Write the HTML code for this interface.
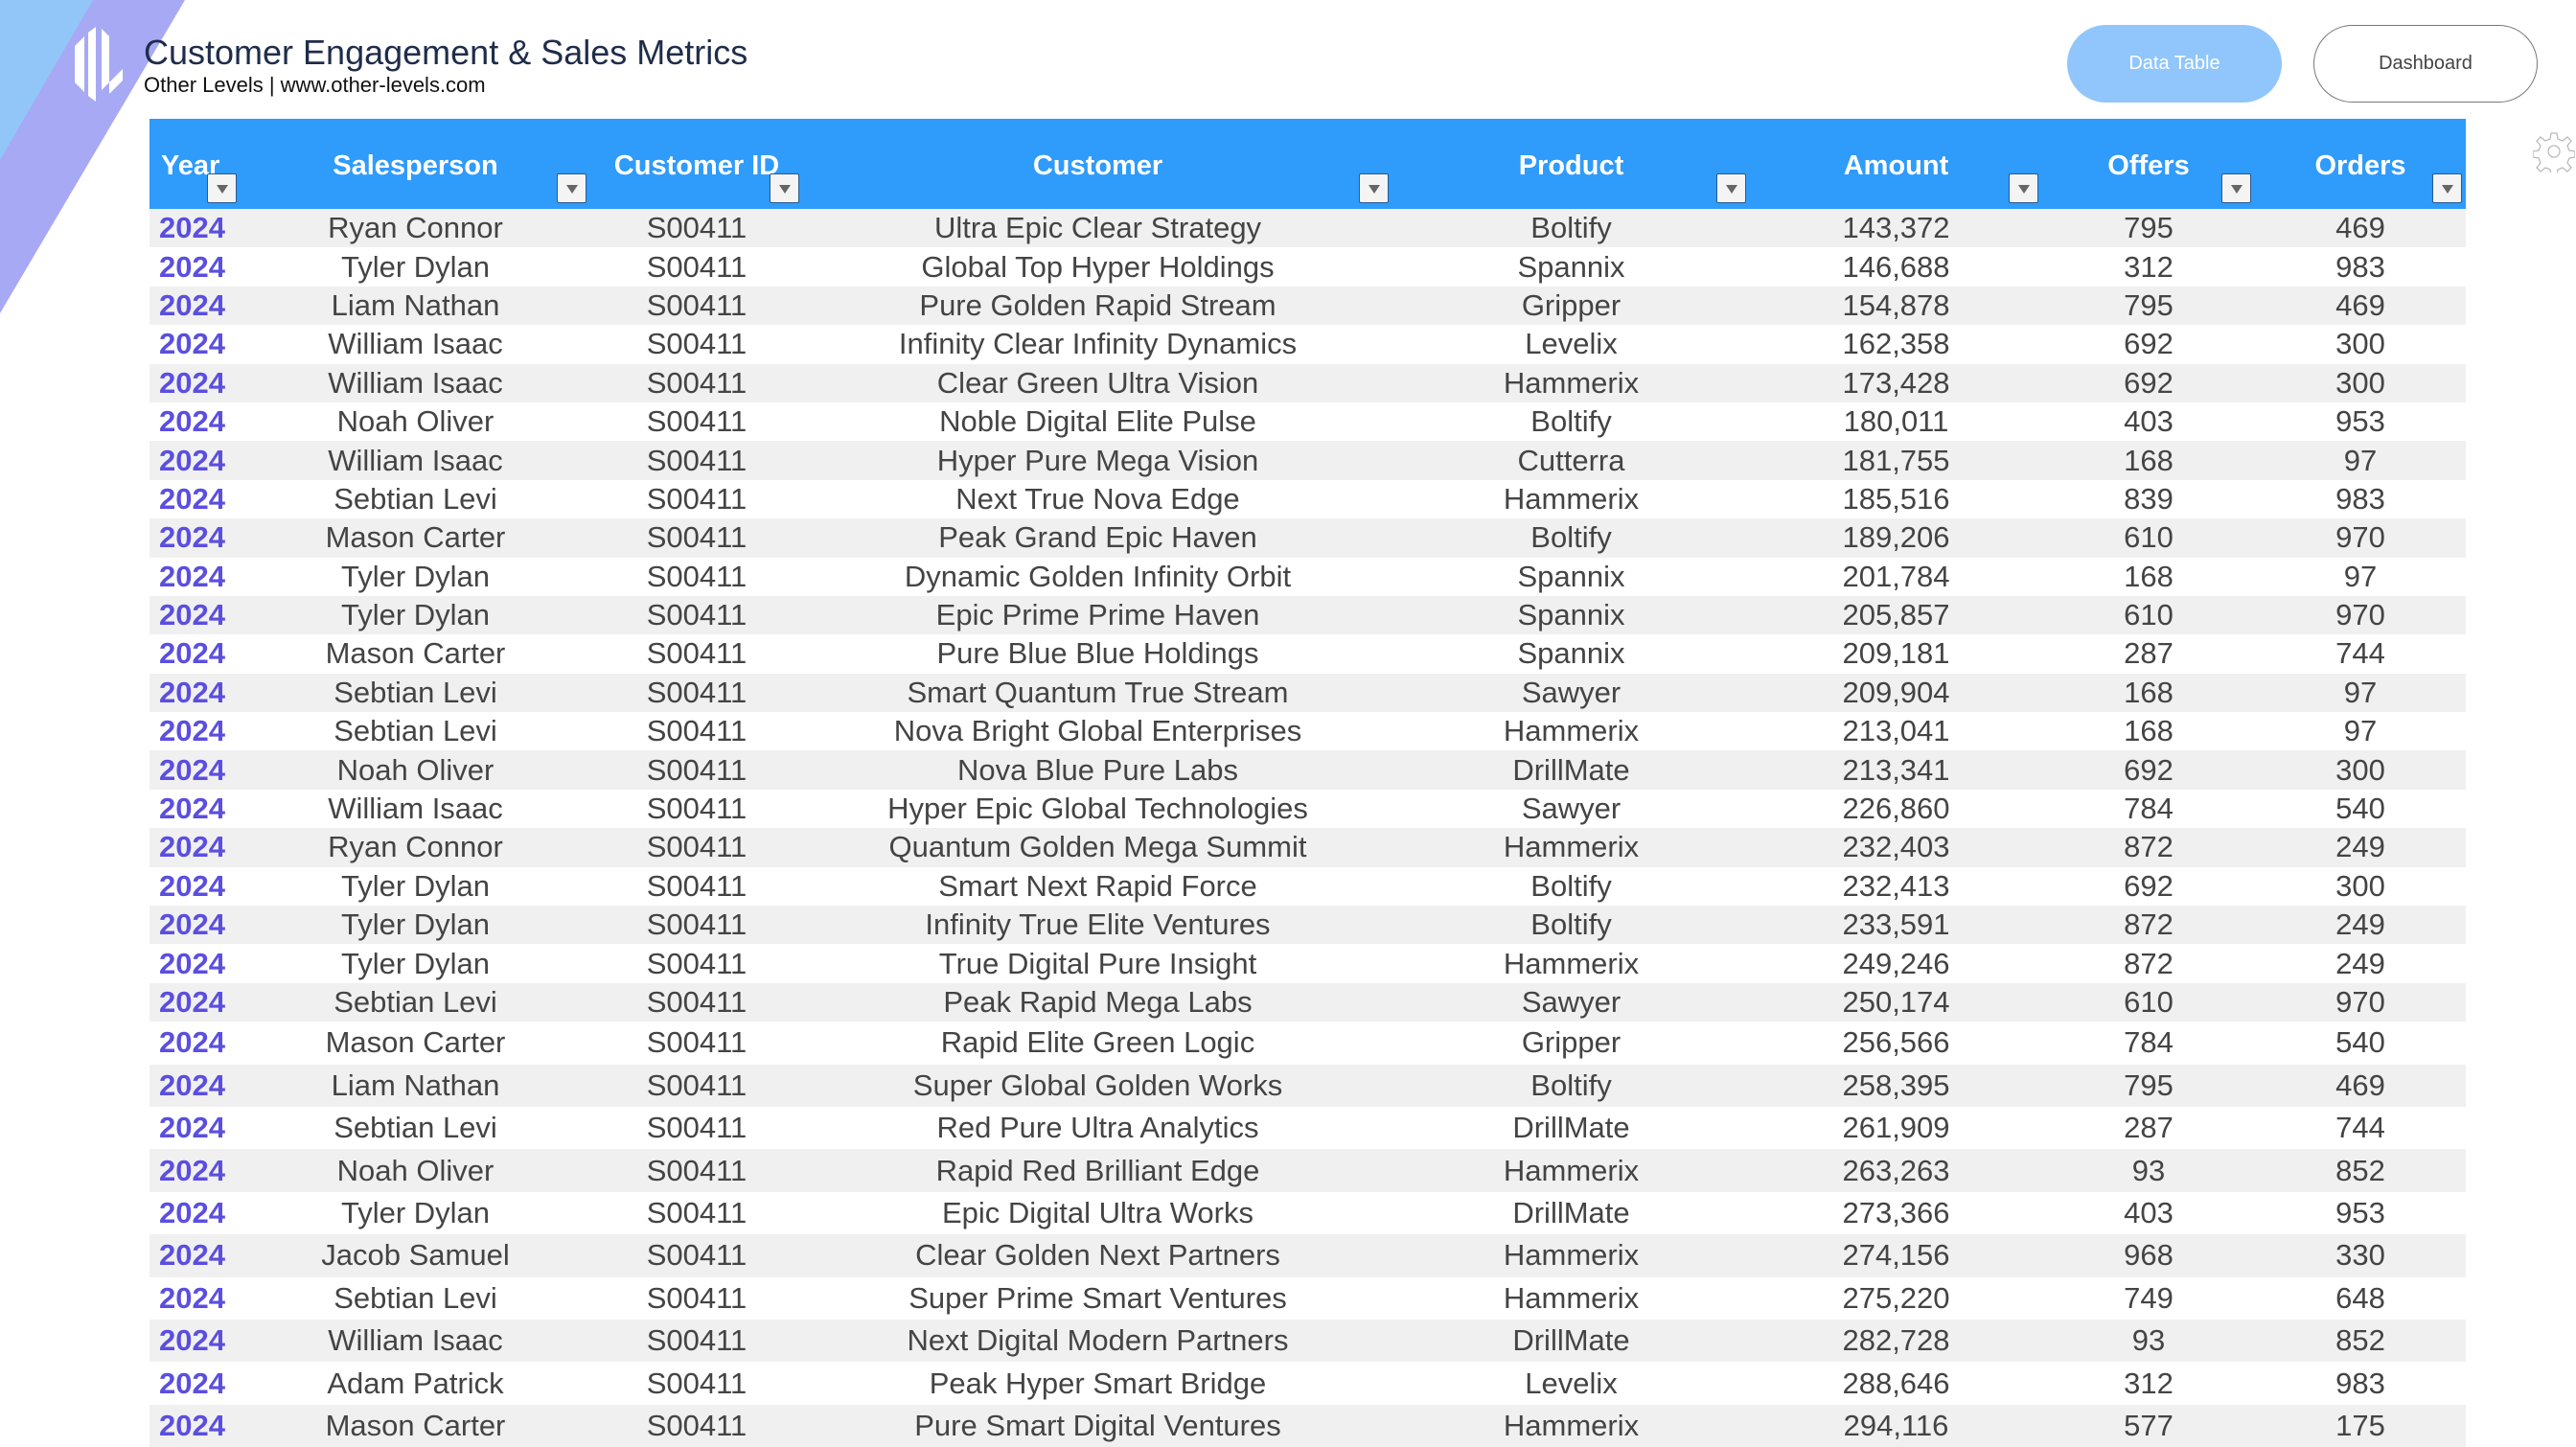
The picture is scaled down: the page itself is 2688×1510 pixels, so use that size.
<!DOCTYPE html>
<html><head><meta charset="utf-8"><style>
*{margin:0;padding:0;box-sizing:border-box}
body{width:2688px;height:1476px;overflow:hidden;background:#fff;font-family:"Liberation Sans",Arial,sans-serif;position:relative}
.abs{position:absolute}
.title{left:150px;top:34px;font-size:36px;color:#1f2d4a}
.sub{left:150px;top:76px;font-size:22px;color:#111}
.btn{top:26px;height:81px;border-radius:41px;font-size:20px;display:flex;align-items:center;justify-content:center}
table{position:absolute;left:156px;top:124px;border-collapse:collapse;table-layout:fixed;width:2417px}
th{background:#2f9bfa;color:#fff;font-size:29px;font-weight:bold;height:94px;position:relative;text-align:center;padding-bottom:0px;padding-top:4px}
td{font-size:31px;color:#444;text-align:center;height:40.4px;padding:0;white-space:nowrap}
tr.t td{height:44.4px}
tbody tr:nth-child(odd) td{background:#f0f0f0}
td.y{color:#5b4ee0;font-weight:bold;text-align:left;padding-left:10px}
.f{position:absolute;bottom:6px;right:4px;width:31px;height:31px;background:#f4f4f4;border:1px solid #2a5a90;border-radius:2px}
.f:after{content:"";position:absolute;left:9px;top:11px;border-left:6px solid transparent;border-right:6px solid transparent;border-top:9px solid #666}
</style></head><body>
<svg class="abs" style="left:0;top:0" width="200" height="340"><polygon points="0,0 193,0 0,327" fill="#a7a9f4"/><polygon points="0,0 97,0 0,167" fill="#92c6f8"/></svg>
<svg class="abs" style="left:76px;top:28px" width="54" height="78" viewBox="0 0 54 78"><g fill="#fff"><polygon points="2,20 12,10 12,68 2,58"/><polygon points="16,6 24,0 24,78 16,72"/><polygon points="30,2 38,10 38,58 30,66"/><polygon points="38,58 52,44 52,56 38,70"/></g></svg>
<div class="abs title">Customer Engagement &amp; Sales Metrics</div>
<div class="abs sub">Other Levels | www.other-levels.com</div>
<div class="abs btn" style="left:2157px;width:224px;background:#90c6fb;color:#fff">Data Table</div>
<div class="abs btn" style="left:2414px;width:234px;border:1.5px solid #777;color:#444">Dashboard</div>
<svg class="abs" style="left:2643px;top:136px" width="44" height="44" viewBox="0 0 44 44"><path d="M19 3h6l1 6 5 2 5-4 4 4-4 5 2 5 6 1v6l-6 1-2 5 4 5-4 4-5-4-5 2-1 6h-6l-1-6-5-2-5 4-4-4 4-5-2-5-6-1v-6l6-1 2-5-4-5 4-4 5 4 5-2z" fill="none" stroke="#bbb" stroke-width="1.3"/><circle cx="22" cy="22" r="6" fill="none" stroke="#bbb" stroke-width="1.3"/></svg>
<table>
<colgroup><col style="width:95px"><col style="width:365px"><col style="width:222px"><col style="width:615px"><col style="width:373px"><col style="width:305px"><col style="width:222px"><col style="width:220px"></colgroup>
<thead><tr><th style="text-align:left;padding-left:12px">Year<span class="f"></span></th><th>Salesperson<span class="f"></span></th><th>Customer ID<span class="f"></span></th><th>Customer<span class="f"></span></th><th>Product<span class="f"></span></th><th>Amount<span class="f"></span></th><th>Offers<span class="f"></span></th><th>Orders<span class="f"></span></th></tr></thead>
<tbody>
<tr><td class="y">2024</td><td>Ryan Connor</td><td>S00411</td><td>Ultra Epic Clear Strategy</td><td>Boltify</td><td>143,372</td><td>795</td><td>469</td></tr>
<tr><td class="y">2024</td><td>Tyler Dylan</td><td>S00411</td><td>Global Top Hyper Holdings</td><td>Spannix</td><td>146,688</td><td>312</td><td>983</td></tr>
<tr><td class="y">2024</td><td>Liam Nathan</td><td>S00411</td><td>Pure Golden Rapid Stream</td><td>Gripper</td><td>154,878</td><td>795</td><td>469</td></tr>
<tr><td class="y">2024</td><td>William Isaac</td><td>S00411</td><td>Infinity Clear Infinity Dynamics</td><td>Levelix</td><td>162,358</td><td>692</td><td>300</td></tr>
<tr><td class="y">2024</td><td>William Isaac</td><td>S00411</td><td>Clear Green Ultra Vision</td><td>Hammerix</td><td>173,428</td><td>692</td><td>300</td></tr>
<tr><td class="y">2024</td><td>Noah Oliver</td><td>S00411</td><td>Noble Digital Elite Pulse</td><td>Boltify</td><td>180,011</td><td>403</td><td>953</td></tr>
<tr><td class="y">2024</td><td>William Isaac</td><td>S00411</td><td>Hyper Pure Mega Vision</td><td>Cutterra</td><td>181,755</td><td>168</td><td>97</td></tr>
<tr><td class="y">2024</td><td>Sebtian Levi</td><td>S00411</td><td>Next True Nova Edge</td><td>Hammerix</td><td>185,516</td><td>839</td><td>983</td></tr>
<tr><td class="y">2024</td><td>Mason Carter</td><td>S00411</td><td>Peak Grand Epic Haven</td><td>Boltify</td><td>189,206</td><td>610</td><td>970</td></tr>
<tr><td class="y">2024</td><td>Tyler Dylan</td><td>S00411</td><td>Dynamic Golden Infinity Orbit</td><td>Spannix</td><td>201,784</td><td>168</td><td>97</td></tr>
<tr><td class="y">2024</td><td>Tyler Dylan</td><td>S00411</td><td>Epic Prime Prime Haven</td><td>Spannix</td><td>205,857</td><td>610</td><td>970</td></tr>
<tr><td class="y">2024</td><td>Mason Carter</td><td>S00411</td><td>Pure Blue Blue Holdings</td><td>Spannix</td><td>209,181</td><td>287</td><td>744</td></tr>
<tr><td class="y">2024</td><td>Sebtian Levi</td><td>S00411</td><td>Smart Quantum True Stream</td><td>Sawyer</td><td>209,904</td><td>168</td><td>97</td></tr>
<tr><td class="y">2024</td><td>Sebtian Levi</td><td>S00411</td><td>Nova Bright Global Enterprises</td><td>Hammerix</td><td>213,041</td><td>168</td><td>97</td></tr>
<tr><td class="y">2024</td><td>Noah Oliver</td><td>S00411</td><td>Nova Blue Pure Labs</td><td>DrillMate</td><td>213,341</td><td>692</td><td>300</td></tr>
<tr><td class="y">2024</td><td>William Isaac</td><td>S00411</td><td>Hyper Epic Global Technologies</td><td>Sawyer</td><td>226,860</td><td>784</td><td>540</td></tr>
<tr><td class="y">2024</td><td>Ryan Connor</td><td>S00411</td><td>Quantum Golden Mega Summit</td><td>Hammerix</td><td>232,403</td><td>872</td><td>249</td></tr>
<tr><td class="y">2024</td><td>Tyler Dylan</td><td>S00411</td><td>Smart Next Rapid Force</td><td>Boltify</td><td>232,413</td><td>692</td><td>300</td></tr>
<tr><td class="y">2024</td><td>Tyler Dylan</td><td>S00411</td><td>Infinity True Elite Ventures</td><td>Boltify</td><td>233,591</td><td>872</td><td>249</td></tr>
<tr><td class="y">2024</td><td>Tyler Dylan</td><td>S00411</td><td>True Digital Pure Insight</td><td>Hammerix</td><td>249,246</td><td>872</td><td>249</td></tr>
<tr><td class="y">2024</td><td>Sebtian Levi</td><td>S00411</td><td>Peak Rapid Mega Labs</td><td>Sawyer</td><td>250,174</td><td>610</td><td>970</td></tr>
<tr class="t"><td class="y">2024</td><td>Mason Carter</td><td>S00411</td><td>Rapid Elite Green Logic</td><td>Gripper</td><td>256,566</td><td>784</td><td>540</td></tr>
<tr class="t"><td class="y">2024</td><td>Liam Nathan</td><td>S00411</td><td>Super Global Golden Works</td><td>Boltify</td><td>258,395</td><td>795</td><td>469</td></tr>
<tr class="t"><td class="y">2024</td><td>Sebtian Levi</td><td>S00411</td><td>Red Pure Ultra Analytics</td><td>DrillMate</td><td>261,909</td><td>287</td><td>744</td></tr>
<tr class="t"><td class="y">2024</td><td>Noah Oliver</td><td>S00411</td><td>Rapid Red Brilliant Edge</td><td>Hammerix</td><td>263,263</td><td>93</td><td>852</td></tr>
<tr class="t"><td class="y">2024</td><td>Tyler Dylan</td><td>S00411</td><td>Epic Digital Ultra Works</td><td>DrillMate</td><td>273,366</td><td>403</td><td>953</td></tr>
<tr class="t"><td class="y">2024</td><td>Jacob Samuel</td><td>S00411</td><td>Clear Golden Next Partners</td><td>Hammerix</td><td>274,156</td><td>968</td><td>330</td></tr>
<tr class="t"><td class="y">2024</td><td>Sebtian Levi</td><td>S00411</td><td>Super Prime Smart Ventures</td><td>Hammerix</td><td>275,220</td><td>749</td><td>648</td></tr>
<tr class="t"><td class="y">2024</td><td>William Isaac</td><td>S00411</td><td>Next Digital Modern Partners</td><td>DrillMate</td><td>282,728</td><td>93</td><td>852</td></tr>
<tr class="t"><td class="y">2024</td><td>Adam Patrick</td><td>S00411</td><td>Peak Hyper Smart Bridge</td><td>Levelix</td><td>288,646</td><td>312</td><td>983</td></tr>
<tr class="t"><td class="y">2024</td><td>Mason Carter</td><td>S00411</td><td>Pure Smart Digital Ventures</td><td>Hammerix</td><td>294,116</td><td>577</td><td>175</td></tr>
</tbody></table>
</body></html>
